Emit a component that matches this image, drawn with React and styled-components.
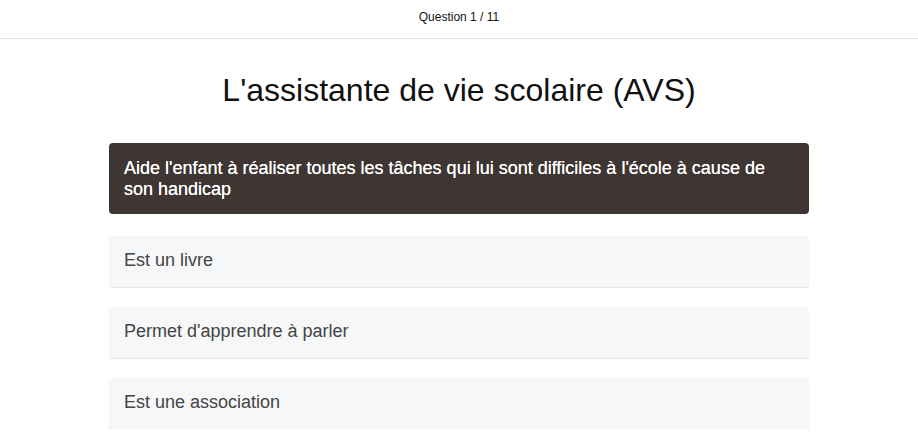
import React from 'react';
import styled, { createGlobalStyle } from 'styled-components';

const GlobalStyle = createGlobalStyle`
  body {
    margin: 0;
    background: #fff;
    font-family: "Liberation Sans", Arial, sans-serif;
    color: #222;
  }
`;

const TopBar = styled.header`
  height: 39px;
  border-bottom: 1px solid #e3e3e3;
  display: flex;
  align-items: center;
  justify-content: center;
  font-size: 12px;
  color: #111;
  padding-bottom: 5px;
  box-sizing: border-box;
`;

const Main = styled.main`
  width: 700px;
  margin: 0 auto;
  display: flex;
  flex-direction: column;
`;

const Title = styled.h1`
  margin: 32px 0 34px;
  text-align: center;
  font-size: 32px;
  font-weight: 400;
  line-height: 38px;
  color: #111;
`;

const Statement = styled.div`
  background: #3f3634;
  color: #fff;
  border-radius: 4px;
  padding: 15px 15px 14px;
  font-size: 18px;
  line-height: 21px;
  margin-bottom: 22px;
  text-shadow: 0 0 0.3px #fff;
`;

const Choices = styled.div`
  display: flex;
  flex-direction: column;
  gap: 20px;
`;

const Choice = styled.button`
  all: unset;
  box-sizing: border-box;
  height: 51px;
  display: flex;
  align-items: center;
  padding: 0 15px 2px;
  background: #f6f7f9;
  border-radius: 4px;
  box-shadow: 0 1px 1px rgba(0, 0, 0, 0.12);
  font-family: "Liberation Sans", Arial, sans-serif;
  font-size: 18px;
  color: #444;
  cursor: pointer;
`;

const answers = ['Est un livre', "Permet d'apprendre à parler", 'Est une association'];

export default function App() {
  return (
    <>
      <GlobalStyle />
      <TopBar>Question 1 / 11</TopBar>
      <Main>
        <Title>L'assistante de vie scolaire (AVS)</Title>
        <Statement>
          Aide l'enfant à réaliser toutes les tâches qui lui sont difficiles à l'école à cause de son
          handicap
        </Statement>
        <Choices>
          {answers.map((a) => (
            <Choice key={a}>{a}</Choice>
          ))}
        </Choices>
      </Main>
    </>
  );
}
